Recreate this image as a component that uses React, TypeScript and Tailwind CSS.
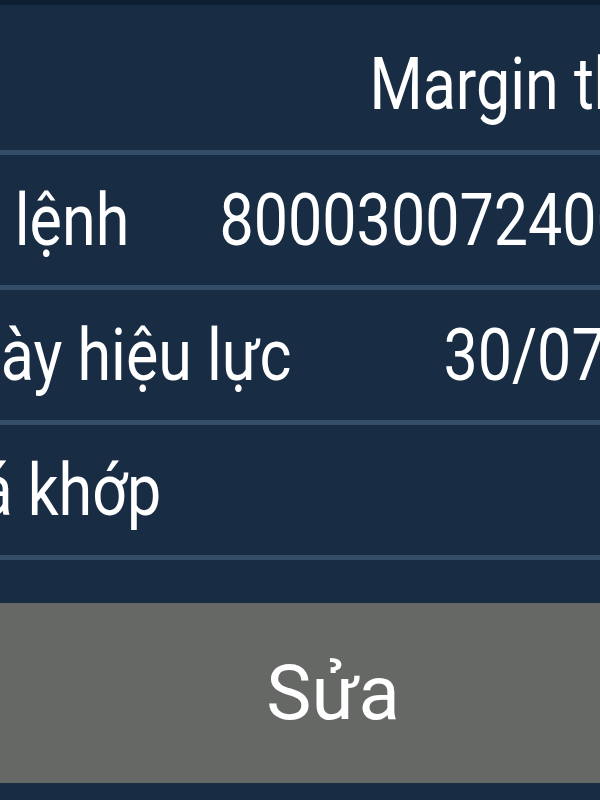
const rows = [
  { label: "", value: "Margin thường", h: "h-[145px] pt-[14px]" },
  { label: "Số\u2004lệnh", value: "8000300724001234", h: "h-[130px]" },
  { label: "Ngày hiệu lực", value: "30/07/2024", h: "h-[130px]" },
  { label: "Giá khớp", value: "", h: "h-[130px]" },
]

export default function App() {
  return (
    <div className="w-[600px] h-[800px] overflow-hidden bg-[#182d44] font-['Roboto',sans-serif] text-white">
      <div className="h-[5px] bg-[#0e1f33]" />

      <div className="-ml-[77px] w-[845px]">
        {rows.map((row, i) => (
          <div key={i}>
            <div className={`flex items-center justify-between ${row.h}`}>
              <span className="text-[61px] leading-none whitespace-nowrap scale-y-[1.19]">{row.label}</span>
              <span className="text-[61px] leading-none whitespace-nowrap scale-y-[1.19]">{row.value}</span>
            </div>
            <div className="h-[5px] bg-[#354e68]" />
          </div>
        ))}
      </div>

      <div className="h-[43px]" />

      {/* action button */}
      <button className="-ml-[78px] w-[822px] h-[180px] bg-[#666865] flex items-center justify-center">
        <span className="text-[76px] leading-none text-white">Sửa</span>
      </button>
    </div>
  )
}
